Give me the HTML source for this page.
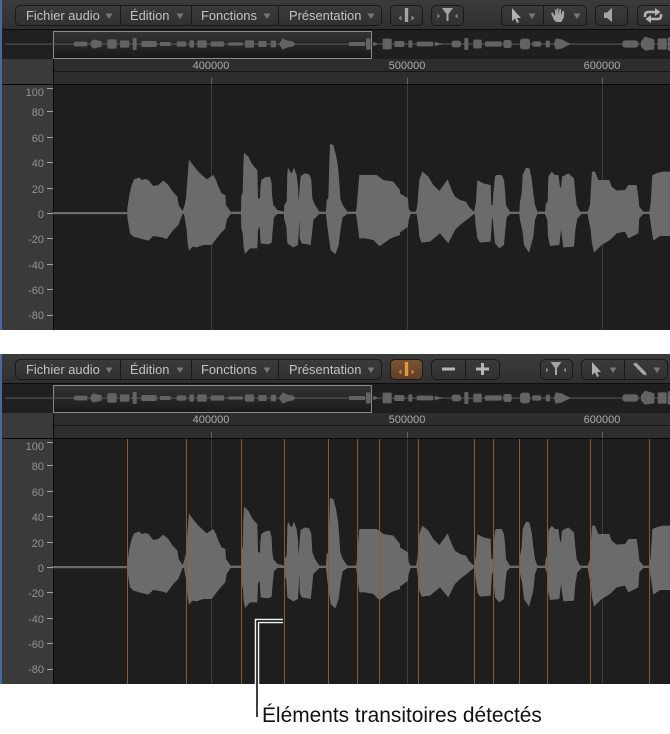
<!DOCTYPE html>
<html><head><meta charset="utf-8"><style>
html,body{margin:0;padding:0;background:#fff}
body{width:670px;height:734px;position:relative;overflow:hidden;font-family:"Liberation Sans",sans-serif}
.p{position:absolute;left:0;width:670px;height:330px;overflow:hidden;background:#1e1e1e}
.p div{position:absolute}
.blue{left:0;top:0;width:2px;height:330px;background:#46699f;z-index:5}
.tb{left:0;top:0;width:670px;height:29px;background:linear-gradient(#3b3b3b,#303030);border-bottom:1px solid #0c0c0c}
.btn{top:5px;height:19px;border:1px solid #191919;border-radius:5px;background:linear-gradient(#3a3a3a,#313131);box-sizing:content-box}
.dv{top:5px;width:1px;height:21px;background:#191919}
.t{top:6px;font-size:12.9px;line-height:19px;color:#c2c2c2;white-space:nowrap}
.ov{left:2px;top:30px;width:668px;height:29px;background:#1f1f1f}
.ovl{left:2px;top:30px;width:51px;height:29px;background:#202020}
.sel{left:53px;top:31px;width:317px;height:26px;border:1px solid #8a8a8a;background:linear-gradient(#343434,#191919)}
.rl{left:2px;top:59px;width:51px;height:271px;background:#3a3a3a}
.rul{left:54px;top:59px;width:616px;height:25px;background:#2d2d2d}
.r1{left:54px;top:71px;width:616px;height:1px;background:#171717}
.r2{left:0;top:84px;width:670px;height:1px;background:#080808}
.vb{left:53px;top:59px;width:1px;height:271px;background:#0a0a0a}
.rt{top:59px;width:60px;text-align:center;font-size:11px;line-height:14px;color:#aaa}
.tick{top:78px;width:1px;height:6px;background:#666}
.g{top:85px;width:1px;height:245px;background:#3d3d3d}
.o{top:85px;width:1px;height:245px;background:#8a5a2c}
.yl{left:4px;width:40px;text-align:right;font-size:11px;line-height:14px;color:#939393;margin-top:1px}
.yt{left:47px;width:6px;height:1px;background:#a5a5a5}
svg{position:absolute;left:0;top:0;overflow:visible}
.lab{position:absolute;left:262px;top:705px;font-size:20.9px;line-height:22px;color:#111;white-space:nowrap}
</style></head><body>

<svg width="0" height="0" style="position:absolute"><defs>
<g id="wave" fill="#6b6b6b">
<rect x="53" y="212" width="75" height="2.2" />
<g transform="translate(100,130) scale(.33333)">
<polygon points="82,245 82,235 88,195 95,165 102,148 118,142 125,150 135,147 145,150 160,168 175,165 190,152 205,165 218,185 232,200 236,225 248,243 254,225 258,205 261,165 265,110 267,88 275,100 295,125 320,148 340,135 348,150 355,170 365,190 376,195 378,225 392,245 423,245 424,195 428,190 430,110 432,68 445,80 455,100 462,110 472,120 474,205 480,205 481,175 484,150 495,142 510,140 515,160 516,195 520,225 532,240 552,245 553,225 560,215 562,130 564,112 570,125 575,130 582,113 590,135 594,170 596,215 599,170 602,138 615,130 628,133 634,150 637,205 645,225 658,245 678,245 680,210 685,205 688,100 690,42 700,45 708,75 714,110 718,160 721,205 728,225 742,245 768,245 770,230 778,135 800,135 830,135 850,150 880,155 900,180 900,315 880,322 860,330 838,348 820,330 795,325 778,325 770,265 768,252 742,252 728,262 722,295 716,345 706,373 692,360 686,320 682,290 678,252 658,252 640,270 636,310 632,345 605,340 599,325 598,270 594,345 580,352 562,340 559,290 552,265 552,252 532,252 522,262 518,300 515,338 505,343 482,340 479,290 474,300 472,355 450,355 435,372 431,350 428,310 424,295 423,252 392,252 380,270 376,295 362,310 350,325 335,345 310,345 290,352 278,350 267,362 263,340 260,300 256,275 252,252 248,252 235,285 220,300 200,327 185,322 160,318 145,332 118,325 100,320 90,310 82,262"/>
</g>
<g transform="translate(380,130) scale(.33333)">
<polygon points="0,142 15,155 40,165 60,190 84,205 86,235 92,245 108,245 112,225 116,175 118,150 127,125 145,140 160,165 178,183 203,148 215,180 225,200 240,210 258,215 268,232 282,245 284,235 288,215 290,180 292,150 310,160 332,165 334,225 338,225 340,190 345,140 348,135 365,135 372,150 376,190 378,225 390,245 418,245 420,215 425,190 428,135 438,113 448,115 455,145 460,190 465,225 472,245 495,245 498,220 503,215 505,140 515,125 525,135 535,135 540,170 543,175 546,140 565,130 582,145 586,190 590,225 600,245 623,245 630,225 633,170 636,125 645,125 655,150 688,150 695,170 710,182 735,180 745,165 770,165 775,200 778,230 790,245 808,245 812,220 817,135 835,128 850,125 870,125 870,318 840,318 820,332 815,300 808,252 790,252 778,265 775,310 745,325 735,305 710,310 690,330 665,345 642,368 636,340 632,300 625,265 623,252 605,252 592,265 586,300 582,350 550,352 543,300 538,345 510,348 504,320 502,270 495,252 472,252 465,270 460,320 447,368 432,345 427,300 420,270 418,252 390,252 380,262 376,300 372,345 358,355 345,340 341,300 338,265 336,265 332,335 300,338 292,325 287,285 284,252 282,252 262,268 240,285 225,300 205,340 180,310 150,335 125,338 118,320 115,285 110,252 92,252 86,270 84,290 50,315 25,330 0,348"/>
</g>
</g>
<g id="mini" fill="#636363">
<rect x="5" y="43.6" width="665" height="1" fill="#5a5a5a"/>
<g transform="scale(.33333) translate(0,132)">
<rect x="222" y="-7" width="40" height="14" rx="3"/><polygon points="272,-6 280,-14 305,-8 305,8 280,14 272,6"/><rect x="322" y="-14" width="28" height="28" rx="3"/><rect x="360" y="-11" width="28" height="22" rx="3"/><rect x="398" y="-18" width="12" height="36" rx="3"/><rect x="424" y="-9" width="46" height="18" rx="3"/><rect x="480" y="-6" width="32" height="12" rx="3"/><rect x="530" y="-8" width="28" height="16" rx="3"/><rect x="568" y="-11" width="14" height="22" rx="3"/><rect x="592" y="-11" width="28" height="22" rx="3"/><rect x="632" y="-8" width="40" height="16" rx="3"/><rect x="685" y="-5" width="43" height="10" rx="3"/><rect x="735" y="-11" width="27" height="22" rx="3"/><rect x="775" y="-9" width="25" height="18" rx="3"/><rect x="812" y="-10" width="16" height="20" rx="3"/><polygon points="838,-3 842,-8 848,-17 858,-12 868,-9 878,-8 885,-2 885,2 878,8 868,9 858,12 848,17 842,8 838,3"/>
<g transform="translate(1005,0)">
<rect x="42" y="-6" width="48" height="12" rx="2"/><rect x="93" y="-17" width="14" height="34" rx="3"/><polygon points="115,-7 130,0 115,7"/><rect x="143" y="-16" width="27" height="32" rx="3"/><rect x="178" y="-9" width="30" height="18" rx="3"/><rect x="220" y="-11" width="12" height="22" rx="3"/><rect x="245" y="-7" width="50" height="14" rx="3"/><polygon points="300,-7 312,-3 325,-1 325,1 312,3 300,7"/><rect x="350" y="-10" width="28" height="20" rx="7"/><rect x="388" y="-18" width="12" height="36" rx="3"/><rect x="415" y="-13" width="25" height="26" rx="3"/><rect x="450" y="-8" width="50" height="16" rx="4"/><rect x="505" y="-12" width="25" height="24" rx="7"/><rect x="555" y="-16" width="30" height="32" rx="8"/><rect x="592" y="-8" width="26" height="16" rx="3"/><rect x="632" y="-10" width="13" height="20" rx="3"/><polygon points="658,-5 662,-17 680,-14 695,-6 705,-2 705,2 695,6 680,14 662,17 658,5"/><rect x="862" y="-11" width="48" height="22" rx="9"/><polygon points="918,-8 930,-22 958,-14 958,16 930,20 918,8"/><rect x="968" y="-17" width="27" height="34" rx="3"/><rect x="998" y="-20" width="20" height="40" rx="2"/>
</g></g></g>
<g id="trans"><rect x="-1.700" y="-8" width="3.400" height="14"/><path d="M-5-.5V4.500L-8 2ZM5-.5V4.500L8 2Z" opacity=".8"/></g>
<g id="funnel"><path d="M-5.500-7H5.500L1-1V6H-1V-1Z"/><path d="M-10-1.500V3.500L-7.500 1ZM10-1.500V3.500L7.500 1Z" opacity=".75"/></g>
<path id="arrow" d="M-4-7V6L-1 3.500 1 8 3 7 1 3H5Z"/>
<path id="tri" d="M-3.500-2.500H3.500L0 3Z" fill="#767676"/>
</defs></svg>

<!-- TOP PANEL -->
<div class="p" style="top:0">
<div class="tb"></div>
<div class="btn" style="left:15px;width:365px"></div>
<div class="dv" style="left:120px"></div><div class="dv" style="left:191px"></div><div class="dv" style="left:278px"></div>
<div class="t" style="left:26px">Fichier audio</div><div class="t" style="left:130px">Édition</div><div class="t" style="left:201px">Fonctions</div><div class="t" style="left:289px">Présentation</div>
<div class="btn" style="left:390px;width:31px"></div>
<div class="btn" style="left:431px;width:31px"></div>
<div class="btn" style="left:501px;width:84px"></div><div class="dv" style="left:543px"></div>
<div class="btn" style="left:595px;width:31px"></div>
<div class="btn" style="left:637px;width:40px"></div>
<div class="ov"></div><div class="ovl"></div><div class="sel"></div>
<div class="rl"></div><div class="rul"></div><div class="r1"></div>
<div class="rt" style="left:181px">400000</div><div class="rt" style="left:377px">500000</div><div class="rt" style="left:572px">600000</div>
<div class="tick" style="left:211px"></div><div class="tick" style="left:407px"></div><div class="tick" style="left:602px"></div>
<div class="r2"></div><div class="vb"></div>
<div class="yl" style="top:85px">100</div><div class="yl" style="top:105px">80</div><div class="yl" style="top:131px">60</div><div class="yl" style="top:156px">40</div><div class="yl" style="top:182px">20</div><div class="yl" style="top:207px">0</div><div class="yl" style="top:232px">-20</div><div class="yl" style="top:258px">-40</div><div class="yl" style="top:283px">-60</div><div class="yl" style="top:308px">-80</div>
<div class="yt" style="top:88px"></div><div class="yt" style="top:111px"></div><div class="yt" style="top:137px"></div><div class="yt" style="top:162px"></div><div class="yt" style="top:188px"></div><div class="yt" style="top:213px"></div><div class="yt" style="top:238px"></div><div class="yt" style="top:264px"></div><div class="yt" style="top:289px"></div><div class="yt" style="top:315px"></div>
<div class="g" style="left:211px"></div><div class="g" style="left:407px"></div><div class="g" style="left:602px"></div>
<svg width="670" height="330">
<use href="#wave"/><use href="#mini"/>
<use href="#tri" x="109" y="16"/><use href="#tri" x="180" y="16"/><use href="#tri" x="267" y="16"/><use href="#tri" x="371" y="16"/>
<g fill="#a5a5a5"><use href="#trans" x="406.500" y="16"/><use href="#funnel" x="447.500" y="15"/></g>
<use href="#arrow" x="516" y="15" fill="#b0b0b0"/><use href="#tri" x="532" y="16"/>
<path d="M554 20 551 13 552.500 12.500 555 16V9.500H556.500V15L557 8.500H558.500V15L559.500 9H561V15.500L562.500 11H564V17L561.500 22H556Z" fill="#a5a5a5"/><use href="#tri" x="577" y="16"/>
<path d="M604 12.500H607L612 8V22L607 18H604Z" fill="#a5a5a5"/>
<path d="M645 17V15.500Q645 12 648.500 12H656M661 14V16Q661 19 657.500 19H650" fill="none" stroke="#b5b5b5" stroke-width="2.500"/>
<path d="M655 8 660.500 12 655 16ZM651 15 645.500 19 651 23Z" fill="#b5b5b5"/>
</svg>
<div class="blue"></div>
</div>

<!-- BOTTOM PANEL -->
<div class="p" style="top:354px">
<div class="tb"></div>
<div class="btn" style="left:15px;width:365px"></div>
<div class="dv" style="left:120px"></div><div class="dv" style="left:191px"></div><div class="dv" style="left:278px"></div>
<div class="t" style="left:26px">Fichier audio</div><div class="t" style="left:130px">Édition</div><div class="t" style="left:201px">Fonctions</div><div class="t" style="left:289px">Présentation</div>
<div class="btn" style="left:390px;width:31px;background:linear-gradient(#7a5230,#5f3f25)"></div>
<div class="btn" style="left:431px;width:67px"></div><div class="dv" style="left:465px"></div>
<div class="btn" style="left:540px;width:31px"></div>
<div class="btn" style="left:581px;width:85px"></div><div class="dv" style="left:624px"></div>
<div class="ov"></div><div class="ovl"></div><div class="sel"></div>
<div class="rl"></div><div class="rul"></div><div class="r1"></div>
<div class="rt" style="left:181px">400000</div><div class="rt" style="left:377px">500000</div><div class="rt" style="left:572px">600000</div>
<div class="tick" style="left:211px"></div><div class="tick" style="left:407px"></div><div class="tick" style="left:602px"></div>
<div class="r2"></div><div class="vb"></div>
<div class="yl" style="top:85px">100</div><div class="yl" style="top:105px">80</div><div class="yl" style="top:131px">60</div><div class="yl" style="top:156px">40</div><div class="yl" style="top:182px">20</div><div class="yl" style="top:207px">0</div><div class="yl" style="top:232px">-20</div><div class="yl" style="top:258px">-40</div><div class="yl" style="top:283px">-60</div><div class="yl" style="top:308px">-80</div>
<div class="yt" style="top:88px"></div><div class="yt" style="top:111px"></div><div class="yt" style="top:137px"></div><div class="yt" style="top:162px"></div><div class="yt" style="top:188px"></div><div class="yt" style="top:213px"></div><div class="yt" style="top:238px"></div><div class="yt" style="top:264px"></div><div class="yt" style="top:289px"></div><div class="yt" style="top:315px"></div>
<div class="g" style="left:211px"></div><div class="g" style="left:407px"></div><div class="g" style="left:602px"></div>
<svg width="670" height="330">
<use href="#wave"/><use href="#mini"/>
<use href="#tri" x="109" y="16"/><use href="#tri" x="180" y="16"/><use href="#tri" x="267" y="16"/><use href="#tri" x="371" y="16"/>
<g fill="#e0973f"><use href="#trans" x="406.500" y="16"/></g>
<rect x="442" y="13.500" width="13" height="3" fill="#b5b5b5"/>
<path d="M476 13.500H481V9H484V13.500H489V16.500H484V21H481V16.500H476Z" fill="#b5b5b5"/>
<use href="#funnel" x="556" y="15" fill="#a5a5a5"/>
<use href="#arrow" x="596" y="15" fill="#b0b0b0"/><use href="#tri" x="613" y="16"/>
<path d="M633 10 636 8.500 646 18.500 646.500 21.500 643 20.500Z" fill="#a5a5a5"/><use href="#tri" x="657" y="16"/>
</svg>
<div class="o" style="left:127px"></div><div class="o" style="left:186px"></div><div class="o" style="left:241px"></div><div class="o" style="left:284px"></div><div class="o" style="left:328px"></div><div class="o" style="left:357px"></div><div class="o" style="left:379px"></div><div class="o" style="left:418px"></div><div class="o" style="left:474px"></div><div class="o" style="left:493px"></div><div class="o" style="left:519px"></div><div class="o" style="left:547px"></div><div class="o" style="left:590px"></div><div class="o" style="left:649px"></div>
<div class="blue"></div>
</div>

<!-- CALLOUT -->
<svg width="670" height="734">
<path d="M283 621H257V684" fill="none" stroke="#f2f2f2" stroke-width="4.500"/>
<path d="M283 621H257V717" fill="none" stroke="#000" stroke-width="1.500"/>
</svg>
<div class="lab">Éléments transitoires détectés</div>
</body></html>
